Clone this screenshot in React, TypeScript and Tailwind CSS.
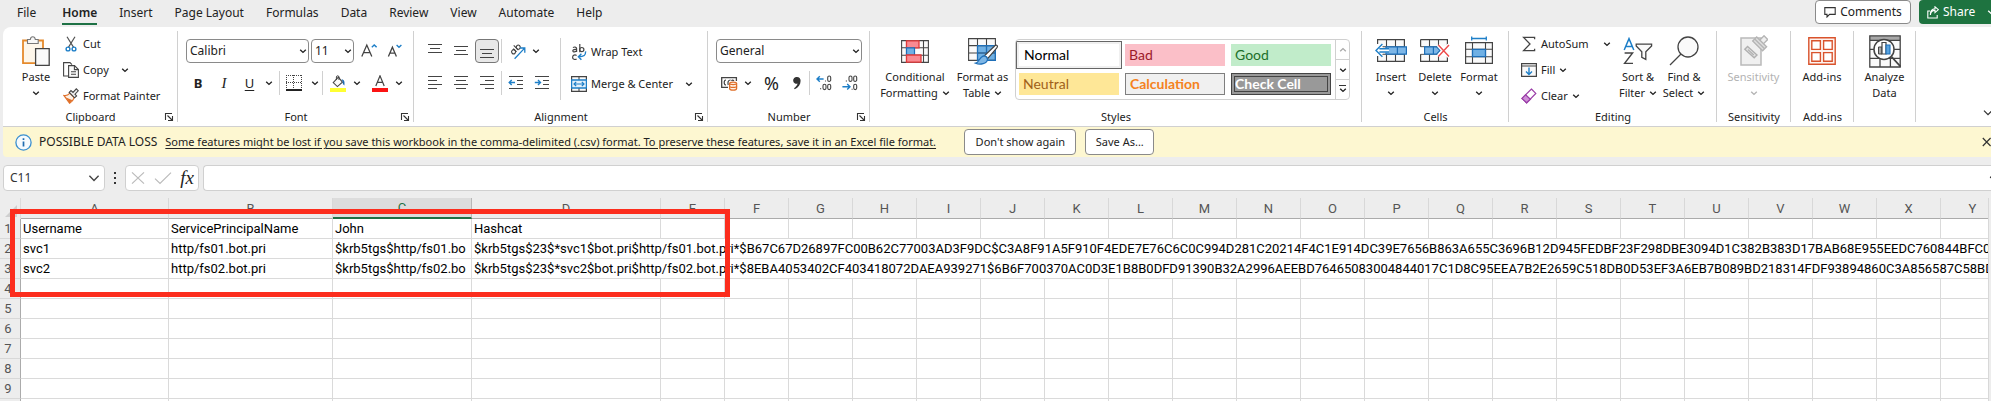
import type { ReactNode } from "react";

const INK = "#444444";
const BLUE = "#1e7fc8";

function Chevron({ className = "" }: { className?: string }) {
  return (
    <svg aria-hidden="true" width="8" height="8" viewBox="0 0 8 8" fill="none" className={`shrink-0 ${className}`}>
      <path d="M1.2 2.8L4 5.4L6.8 2.8" stroke="currentColor" strokeWidth="1.4" />
    </svg>
  );
}

function Launcher({ label }: { label: string }) {
  return (
    <button aria-label={label} className="absolute right-1 bottom-1 flex size-2.5 items-center justify-center text-[#333]">
      <svg aria-hidden="true" width="10" height="10" viewBox="0 0 10 10" fill="none" stroke="currentColor" strokeWidth="1.1">
        <path d="M1.5 8V1.5H8M3.5 3.5L8 8M8.5 4V8.5H4" />
      </svg>
    </button>
  );
}

function Group({ label, launcher, className = "", children }: { label?: string; launcher?: boolean; className?: string; children: ReactNode }) {
  return (
    <section aria-label={label} className={`relative flex h-full shrink-0 flex-col ${className}`}>
      <div className="flex h-20 shrink-0">{children}</div>
      <div className="h-5 text-center leading-5">{label}</div>
      {launcher && <Launcher label={`${label} settings`} />}
      <div className="absolute top-1 right-0 bottom-1 w-px bg-[#d0d0d0]" />
    </section>
  );
}

function BigButton({ icon, lines, chevron = "none", className = "" }: { icon: ReactNode; lines: string[]; chevron?: "below" | "inline" | "none"; className?: string }) {
  return (
    <button className={`flex shrink-0 flex-col items-center whitespace-nowrap ${className}`}>
      <span className="mt-1.5 flex h-9 items-center">{icon}</span>
      {lines.map((line, i) => (
        <span key={line} className="flex h-4 items-center gap-1 leading-4">
          {line}
          {chevron === "inline" && i === lines.length - 1 && <Chevron />}
        </span>
      ))}
      {chevron === "below" && (
        <span className="flex h-4 items-center">
          <Chevron />
        </span>
      )}
    </button>
  );
}

function IconButton({ label, className = "w-[26px]", children }: { label: string; className?: string; children: ReactNode }) {
  return (
    <button aria-label={label} className={`flex h-6 shrink-0 items-center justify-center ${className}`}>
      {children}
    </button>
  );
}

function Divider({ className = "h-6" }: { className?: string }) {
  return <span className={`w-px shrink-0 bg-[#d0d0d0] ${className}`} />;
}

function Dropdown({ label, value, className }: { label: string; value: string; className: string }) {
  return (
    <div className={`relative flex h-6 shrink-0 ${className}`}>
      <select aria-label={label} defaultValue={value} className="h-6 w-full appearance-none rounded border border-[#8a8a8a] bg-white pl-[3px] text-[12px] text-[#222]">
        <option>{value}</option>
      </select>
      <Chevron className="pointer-events-none absolute top-2 right-0.5" />
    </div>
  );
}

function Lines({ rows, y = 1 }: { rows: [number, number][]; y?: number }) {
  return (
    <svg aria-hidden="true" width="16" height="16" viewBox="0 0 16 16" stroke={INK} strokeWidth="1.2">
      {rows.map(([a, b], i) => (
        <path key={i} d={`M${a} ${y + 0.5 + i * 4}H${b}`} />
      ))}
    </svg>
  );
}

function PasteIcon() {
  return (
    <svg aria-hidden="true" width="28" height="30" viewBox="0 0 28 30" fill="none">
      <path d="M1 4.5H21V27.2H1Z" fill="#fdf6ea" stroke="#e58a2c" strokeWidth="1.8" />
      <path d="M5.5 7.5V3.5H8.3C8.5 1.9 9.4.7 10.8.7S13.1 1.9 13.3 3.5H16.2V7.5Z" fill="#f7f7f7" stroke="#777" strokeWidth="1.1" />
      <path d="M13.6 12.6H27.2V29.3H13.6Z" fill="#fafafa" stroke={INK} strokeWidth="1.3" />
    </svg>
  );
}

function CutIcon() {
  return (
    <svg aria-hidden="true" width="16" height="16" viewBox="0 0 16 16" fill="none">
      <path d="M4 .8L10.6 11.4M12 .8L5.4 11.4" stroke="#555" strokeWidth="1.2" />
      <circle cx="5" cy="13" r="1.9" stroke={BLUE} strokeWidth="1.4" />
      <circle cx="11" cy="13" r="1.9" stroke={BLUE} strokeWidth="1.4" />
    </svg>
  );
}

function CopyIcon() {
  return (
    <svg aria-hidden="true" width="16" height="16" viewBox="0 0 16 16" fill="none" stroke={INK} strokeWidth="1.1">
      <path d="M5 14H.6V.6H7L9 2.6" />
      <path d="M5.6 3.6H11.5L15.4 7.5V15.4H5.6Z" fill="#fafafa" />
      <path d="M11.4 3.6V7.6H15.4M8 9.7H13M8 12.3H13" />
    </svg>
  );
}

function PainterIcon() {
  return (
    <svg aria-hidden="true" width="16" height="16" viewBox="0 0 16 16" fill="none">
      <path d="M1 7.5C3.5 8 5.6 6.6 7 5.2L11.2 9.6C10.4 12 8.8 14 6.6 15.2Z" fill="#fdf0e4" stroke="#e0702a" strokeWidth="1.2" />
      <path d="M3 9.6L9.5 12.2L6.6 15Z" fill="#e0702a" />
      <path d="M6.2 4.4L8 2.6L10 4.4L13.3.8L15.3 2.8L12 6.2L13.6 8L11.6 9.8Z" fill="#eee" stroke={INK} strokeWidth="1.1" />
    </svg>
  );
}

function BordersIcon() {
  return (
    <svg aria-hidden="true" width="16" height="16" viewBox="0 0 16 16" fill="none" stroke={INK}>
      <path d="M0 .5H16M0 7.5H16M.5 0V14M7.5 0V14M15.5 0V14" strokeDasharray="1 1" />
      <path d="M0 15H16" strokeWidth="1.8" stroke="#222" />
    </svg>
  );
}

function FillColorIcon() {
  return (
    <svg aria-hidden="true" width="16" height="17" viewBox="0 0 16 17" fill="none">
      <path d="M3.2 7.6L8.4 2.2L12.4 7.2L7.4 11.6Z" fill="#fafafa" stroke={INK} strokeWidth="1.1" />
      <path d="M6.4 5V2C6.4.4 9 .4 9 2V5" stroke={INK} strokeWidth="1" />
      <path d="M11.6 4.2C14.6 4.4 14.8 7.4 14.4 10.4C13 9.8 12.4 7.6 12.6 6.4Z" fill="#1f6cb0" />
      <path d="M0 13H16V17H0Z" fill="#ffff33" />
    </svg>
  );
}

function FontColorIcon() {
  return (
    <svg aria-hidden="true" width="16" height="17" viewBox="0 0 16 17" fill="none">
      <path d="M3.8 11L8 .8L12.2 11M5.3 7.4H10.7" stroke={INK} strokeWidth="1.2" />
      <path d="M0 13H16V17H0Z" fill="#fb1414" />
    </svg>
  );
}

function GrowFontIcon({ shrink }: { shrink?: boolean }) {
  return shrink ? (
    <svg aria-hidden="true" width="16" height="16" viewBox="0 0 16 16" fill="none">
      <path d="M1.4 13.4L5.4 4.2L9.4 13.4M2.9 10.2H7.9" stroke={INK} strokeWidth="1.3" />
      <path d="M9.6 2L12 4.2L14.4 2" stroke={BLUE} strokeWidth="1.4" />
    </svg>
  ) : (
    <svg aria-hidden="true" width="16" height="16" viewBox="0 0 16 16" fill="none">
      <path d="M.8 13.4L5.8 2L10.8 13.4M2.6 9.6H9" stroke={INK} strokeWidth="1.3" />
      <path d="M10.8 4.2L13.2 2L15.6 4.2" stroke={BLUE} strokeWidth="1.4" />
    </svg>
  );
}

function OrientationIcon() {
  return (
    <svg aria-hidden="true" width="17" height="17" viewBox="0 0 17 17" fill="none">
      <g transform="rotate(-45 6 6)" stroke={INK} strokeWidth="1.1">
        <circle cx="3" cy="7" r="2" />
        <path d="M5 4.6V9.2M7.6 2.6V9.2" />
        <circle cx="9.6" cy="7" r="2" />
      </g>
      <path d="M5.6 15.8L15.4 5.4M11 5H15.8V9.8" stroke={BLUE} strokeWidth="1.3" />
    </svg>
  );
}

function IndentIcon({ increase }: { increase?: boolean }) {
  return (
    <svg aria-hidden="true" width="16" height="16" viewBox="0 0 16 16" fill="none">
      <path d="M1 1.5H15M9 5.5H15M9 9.5H15M1 13.5H15" stroke={INK} strokeWidth="1.2" />
      <path d={increase ? "M.8 7.5H6.4M4 5L6.5 7.5L4 10" : "M7 7.5H1.2M3.7 5L1.2 7.5L3.7 10"} stroke={BLUE} strokeWidth="1.4" />
    </svg>
  );
}

function WrapIcon() {
  return (
    <svg aria-hidden="true" width="16" height="17" viewBox="0 0 16 17" fill="none">
      <g stroke={INK} strokeWidth="1.2">
        <path d="M2 3.6C3 2.8 5.6 2.6 5.6 4.6V8M5.6 5.4C3.6 5.2 1.8 5.6 1.8 6.8C1.8 8.4 4.8 8.2 5.6 6.6" />
        <path d="M8.8 0V8.2" />
        <circle cx="10.8" cy="5.6" r="2.1" />
        <path d="M5.6 11.4C4 10.4 1.6 11 1.6 13.2S4 16 5.6 15" />
      </g>
      <path d="M14.6 7.4C14.8 11.2 13 12.8 7.6 12.8M10.4 9.8L7.4 12.8L10.4 15.8" stroke={BLUE} strokeWidth="1.4" />
    </svg>
  );
}

function MergeIcon() {
  return (
    <svg aria-hidden="true" width="16" height="16" viewBox="0 0 16 16" fill="none">
      <path d="M.6.6H15.4V15.4H.6Z" fill="#fafafa" stroke={INK} strokeWidth="1.2" />
      <path d="M8 1V4M8 12V15" stroke={INK} strokeWidth="1.1" />
      <path d="M.6 4H15.4V12H.6Z" fill="#e4f1fb" stroke={BLUE} strokeWidth="1.3" />
      <path d="M3 8H13M5.2 5.8L3 8L5.2 10.2M10.8 5.8L13 8L10.8 10.2" stroke={BLUE} strokeWidth="1.2" />
    </svg>
  );
}

function CurrencyIcon() {
  return (
    <svg aria-hidden="true" width="17" height="15" viewBox="0 0 17 15" fill="none">
      <path d="M7 11.4H.7V1.6H15.4V5" stroke={INK} strokeWidth="1.3" />
      <path d="M5 4C2.6 4 2.6 9 5 9M9.6 4C7 4 6.6 6.5 7.2 9M13 4.8C12 3.8 11 3.8 10.6 5" stroke={INK} strokeWidth="1.2" />
      <path d="M8.6 7.4C8.6 5.6 15.6 5.6 15.6 7.4V12.4C15.6 14.6 8.6 14.6 8.6 12.4Z" fill="#fff3e8" stroke="#e0702a" strokeWidth="1.3" />
      <path d="M8.6 7.6C8.6 9 15.6 9 15.6 7.6M8.6 10.2C8.6 11.8 15.6 11.8 15.6 10.2" stroke="#e0702a" strokeWidth="1.2" />
    </svg>
  );
}

function DecimalIcon({ increase }: { increase?: boolean }) {
  return (
    <svg aria-hidden="true" width="16" height="16" viewBox="0 0 16 16" fill="none">
      <g stroke={INK} strokeWidth="1.1">
        <rect x="11.7" y="1" width="3" height="5.4" rx="1.5" />
        {!increase && <rect x="7" y="1" width="3" height="5.4" rx="1.5" />}
        {increase && <rect x="7" y="9.2" width="3" height="5.4" rx="1.5" />}
        <rect x="11.7" y="9.2" width="3" height="5.4" rx="1.5" />
        <path d={increase ? "M4 13.8H5.2M9 6H9.9" : "M3.8 6H5M9.6 14.2H10.6"} />
      </g>
      <path d={increase ? "M7.6 4H1M3.8 1.2L1 4L3.8 6.8" : "M.4 11.8H8M5.2 9L8 11.8L5.2 14.6"} stroke={BLUE} strokeWidth="1.4" />
    </svg>
  );
}

function ConditionalIcon() {
  return (
    <svg aria-hidden="true" width="28" height="23" viewBox="0 0 28 23" fill="none">
      <path d="M.6.6H27.4V22.4H.6Z" fill="#fafafa" />
      <path d="M.6.6H27.4V22.4H.6ZM5.5.6V22.4M22.5.6V22.4M.6 7.8H27.4M.6 15.2H27.4" stroke={INK} strokeWidth="1.1" />
      <path d="M5.5.8H18V7.8H5.5Z" fill="#f98a92" stroke="#e03a3a" strokeWidth="1.3" />
      <path d="M5.5 7.8H13.5V15.2H5.5Z" fill="#6fb0e4" stroke="#1e6fb8" strokeWidth="1.2" />
      <path d="M5.5 15H20V22.2H5.5Z" fill="#f98a92" stroke="#e03a3a" strokeWidth="1.3" />
    </svg>
  );
}

function TableBrushIcon() {
  return (
    <svg aria-hidden="true" width="30" height="28" viewBox="0 0 30 28" fill="none">
      <path d="M.6 1.6H27.4V23.4H.6Z" fill="#fafafa" />
      <path d="M9.5 8.6H27.4V23.4H9.5Z" fill="#6fb0e4" />
      <path d="M.6 1.6H27.4V23.4H.6ZM9.5 1.6V23.4M18.5 1.6V23.4M.6 8.6H27.4M.6 16H27.4" stroke={INK} strokeWidth="1.1" />
      <path d="M9.5 8.6H27.4V23.4H9.5ZM18.5 8.6V23.4M9.5 16H27.4" stroke="#1e6fb8" strokeWidth="1.2" />
      <path d="M28.6 8.2C30 9 29.4 10.2 28.6 11.2L19.6 21.6L16.4 18.8L26.4 9.2C27.2 8.4 27.8 7.8 28.6 8.2Z" fill="#fff" stroke={INK} strokeWidth="1.2" />
      <path d="M16.2 18.8C18.4 19.2 19.6 20.6 19.4 22.8C19 26.4 12.4 28.4 7.6 26.2C11.6 25.6 11.2 19.2 16.2 18.8Z" fill="#7db6e6" stroke="#1e6fb8" strokeWidth="1.2" />
    </svg>
  );
}

function InsertIcon() {
  return (
    <svg aria-hidden="true" width="32" height="24" viewBox="0 0 32 24" fill="none">
      <path d="M2.6.6H29.4V22.4H2.6Z" fill="#fafafa" stroke={INK} strokeWidth="1.2" />
      <path d="M11.5.6V22.4M20.5.6V22.4M2.6 7.8H29.4M2.6 15.2H29.4" stroke={INK} strokeWidth="1.1" />
      <path d="M11 7.8H31.4V15.2H11ZM22.4 7.8V15.2" fill="#7db6e6" stroke="#1e6fb8" strokeWidth="1.2" />
      <path d="M0 5H7L8 9.8H14V13.4H8L7 17H0Z" fill="#fff" />
      <path d="M7.4 5L1 11.4L7.4 17.8M14 9.8H4.4M14 13H4.4" stroke={BLUE} strokeWidth="1.4" />
    </svg>
  );
}

function DeleteIcon() {
  return (
    <svg aria-hidden="true" width="30" height="24" viewBox="0 0 30 24" fill="none">
      <path d="M.6.6H27.4V22.4H.6V15.2M.6 7.8V.6" fill="#fafafa" stroke={INK} strokeWidth="1.2" />
      <path d="M9.5.6V7.8M18.5.6V7.8M9.5 15.2V22.4M18.5 15.2V22.4M.6 7.8H27.4M.6 15.2H27.4" stroke={INK} strokeWidth="1.1" />
      <path d="M0 8.6H4V14.4H0Z" fill="#fff" />
      <path d="M4.6 7.8H16.5L20 11.4L16.5 15.2H4.6ZM13.4 7.8V15.2" fill="#7db6e6" stroke="#1e6fb8" strokeWidth="1.2" />
      <path d="M22 7H30V17H22Z" fill="#fff" />
      <path d="M18.4 6L29 17.4M29 6L18.4 17.4" stroke="#fff" strokeWidth="4" />
      <path d="M18.4 6L29 17.4M29 6L18.4 17.4" stroke="#ee4b4b" strokeWidth="1.4" />
    </svg>
  );
}

function FormatIcon() {
  return (
    <svg aria-hidden="true" width="28" height="32" viewBox="0 0 28 32" fill="none">
      <path d="M.6 7.6H27.4V28.4H.6Z" fill="#fafafa" stroke={INK} strokeWidth="1.2" />
      <path d="M7.5 7.6V28.4M20.5 7.6V28.4M.6 14.3H27.4M.6 21.7H27.4" stroke={INK} strokeWidth="1.1" />
      <path d="M7.5 14.3H20.5V21.7H7.5Z" fill="#6fb0e4" stroke="#1e6fb8" strokeWidth="1.3" />
      <path d="M6.7 3.5H21.3M6.7 1.5V5.5M21.3 1.5V5.5" stroke={BLUE} strokeWidth="1.3" />
    </svg>
  );
}

function SumIcon() {
  return (
    <svg aria-hidden="true" width="16" height="16" viewBox="0 0 16 16" fill="none" stroke={INK} strokeWidth="1.3">
      <path d="M13.6 3.2V1.4H2.6L9 8L2.6 14.6H13.6V12.8" />
    </svg>
  );
}

function FillIcon() {
  return (
    <svg aria-hidden="true" width="16" height="16" viewBox="0 0 16 16" fill="none">
      <path d="M.6 1.6H15.4V14.4H.6ZM.6 4H15.4" fill="#fafafa" stroke={INK} strokeWidth="1.2" />
      <path d="M8 5.6V12.2M5 9.4L8 12.4L11 9.4" stroke={BLUE} strokeWidth="1.4" />
    </svg>
  );
}

function ClearIcon() {
  return (
    <svg aria-hidden="true" width="16" height="16" viewBox="0 0 16 16" fill="none" stroke="#9b3fa8" strokeWidth="1.2">
      <path d="M10.4 1L14.8 5.4L5.6 14.8L1 10.4Z" fill="#fff" />
      <path d="M4.6 6.8L9.4 11.2L5.6 14.8L1 10.4Z" fill="#cf8fd8" />
    </svg>
  );
}

function SortIcon() {
  return (
    <svg aria-hidden="true" width="30" height="28" viewBox="0 0 30 28" fill="none">
      <path d="M1.2 13L6 1.6L10.8 13M2.8 9.4H9.2" stroke={BLUE} strokeWidth="1.5" />
      <path d="M1.6 16H9.6L1.6 26.4H10" stroke={INK} strokeWidth="1.4" />
      <path d="M13.2 7.2H28.6V9L22.8 14.8V22.4L18.8 20.4V14.8L13.2 9Z" fill="#fafafa" stroke={INK} strokeWidth="1.3" />
    </svg>
  );
}

function FindIcon() {
  return (
    <svg aria-hidden="true" width="30" height="30" viewBox="0 0 30 30" fill="none" stroke={INK} strokeWidth="1.3">
      <circle cx="19" cy="11" r="10" fill="#fafafa" />
      <path d="M12 18L1 29" />
    </svg>
  );
}

function SensitivityIcon() {
  return (
    <svg aria-hidden="true" width="28" height="32" viewBox="0 0 28 32" fill="none">
      <path d="M1 3H21V30H1Z" fill="#f0f0f0" stroke="#b9b9b9" strokeWidth="1.5" />
      <g transform="translate(20.5 8) rotate(45)" fill="#efefef" stroke="#b5b5b5" strokeWidth="1.4">
        <path d="M-2.6-7.6H2.6V-1H-2.6Z" />
        <path d="M-7 -1.6H7V4H-7Z" fill="#dedede" />
        <path d="M-7 1.2H7" />
      </g>
      <path d="M7.6 11.4L17 20L14.2 22.8L4.8 14.2Z" fill="#e2e2e2" stroke="#b0b0b0" strokeWidth="1.4" />
      <path d="M8 14.6L13.8 20" stroke="#b0b0b0" strokeWidth="1.2" />
    </svg>
  );
}

function AddInsIcon() {
  return (
    <svg aria-hidden="true" width="28" height="28" viewBox="0 0 28 28" fill="#fff" stroke="#d9532c" strokeWidth="1.4">
      <path d="M.8.8H27.2V27.2H.8Z" fill="#fdf3ef" />
      <path d="M3.8 3.8H12.4V12.4H3.8ZM15.6 3.8H24.2V12.4H15.6ZM3.8 15.6H12.4V24.2H3.8ZM15.6 15.6H24.2V24.2H15.6Z" />
    </svg>
  );
}

function AnalyzeIcon() {
  return (
    <svg aria-hidden="true" width="32" height="33" viewBox="0 0 32 33" fill="none">
      <path d="M.8.8H31.2V32H.8Z" fill="#fafafa" />
      <path d="M.8.8H31.2V5.4H.8Z" fill="#a8a8a8" />
      <path d="M.8.8H31.2V32H.8ZM.8 5.4H31.2M.8 14.4H31.2M.8 23.4H31.2M11 5.4V32M21.4 5.4V32" stroke={INK} strokeWidth="1.3" />
      <circle cx="15" cy="14.4" r="10" fill="#fff" stroke={INK} strokeWidth="1.5" />
      <path d="M9.5 12H13V19H9.5Z" fill="#aaa" stroke={INK} />
      <path d="M13 7.5H17V19H13Z" fill="#fff" stroke={INK} strokeWidth="1.2" />
      <path d="M17 10H21V19H17Z" fill="#5aa4e0" stroke="#1e6fb8" strokeWidth="1.1" />
      <path d="M22.4 21.6L31.6 31.6" stroke={INK} strokeWidth="1.6" />
    </svg>
  );
}

const tabs = ["Home", "Insert", "Page Layout", "Formulas", "Data", "Review", "View", "Automate", "Help"];

function TabBar() {
  return (
    <header className="flex h-[27px] shrink-0 items-start text-[12px]">
      <nav aria-label="Ribbon tabs" className="flex pl-[6px]">
        <button className="mr-1 flex h-[25px] flex-col px-[11px]">
          <span className="pt-[3px] leading-5">File</span>
        </button>
        {tabs.map((t) => (
          <button key={t} className="flex h-[25px] flex-col items-stretch px-[11px]">
            <span className={t === "Home" ? "border-b-2 border-[#1e7145] pt-[3px] leading-5 font-semibold" : "pt-[3px] leading-5"}>{t}</span>
          </button>
        ))}
      </nav>
      <button className="ml-auto flex h-6 w-24 shrink-0 items-center justify-center gap-1 rounded border border-[#8a8a8a] bg-white text-[#222]">
        <svg aria-hidden="true" width="12" height="12" viewBox="0 0 12 12" fill="none" stroke="#333" strokeWidth="1.1">
          <path d="M.8 1.6H11.2V8.4H5.6L3 11V8.4H.8Z" />
        </svg>
        Comments
      </button>
      <button className="ml-2 flex h-6 w-[72px] shrink-0 items-center gap-1 rounded-l bg-[#1e7340] pl-2 text-white">
        <svg aria-hidden="true" width="12" height="13" viewBox="0 0 12 13" fill="none" stroke="white" strokeWidth="1.1">
          <path d="M3 5H.8V12H10.2V9M3.4 9C3.6 5.8 5.4 4.4 8 4.4V6.6L11.4 3.6L8 .8V2.8C4.8 3 3.2 5.4 3.4 9Z" />
        </svg>
        Share
        <Chevron className="-mr-1 ml-auto" />
      </button>
    </header>
  );
}

function SmallRow({ icon, text, children }: { icon: ReactNode; text: string; children?: ReactNode }) {
  return (
    <button className="flex h-[26px] shrink-0 items-center gap-1 whitespace-nowrap">
      {icon}
      <span>{text}</span>
      {children}
    </button>
  );
}

function StylesGallery() {
  const cell = "flex h-[22px] w-[100px] items-center pl-1 text-[14px] font-['Lato',sans-serif]";
  return (
    <div className="mt-3 flex h-[61px] w-[335px] shrink-0 overflow-hidden rounded border border-[#d0d0d0]">
      <div className="grid flex-1 grid-cols-[106px_106px_106px] grid-rows-2 items-center">
        <button className="flex h-7 w-[106px] items-center border border-[#666] pl-[7px] font-['Lato',sans-serif] text-[14px] text-black shadow-[inset_0_0_0_2px_#f0f0f0]">Normal</button>
        <button className={`${cell} ml-[3px] bg-[#fbbfc8] text-[#9c1a2a]`}>Bad</button>
        <button className={`${cell} ml-[3px] bg-[#c1ecca] text-[#20702a]`}>Good</button>
        <button className={`${cell} ml-[3px] bg-[#fee797] text-[#a0601a]`}>Neutral</button>
        <button className={`${cell} ml-[3px] border border-[#7f7f7f] bg-[#f0f0f0] font-bold text-[#f58220]`}>Calculation</button>
        <button className={`${cell} ml-[3px] border-4 border-double border-[#444] bg-[#999] font-bold text-white`}>
          <span className="-ml-1">Check Cell</span>
        </button>
      </div>
      <div className="flex w-[14px] flex-col border-l border-[#d0d0d0]">
        <button aria-label="Scroll styles up" className="flex flex-1 items-center justify-center text-[#aaa]">
          <Chevron className="rotate-180" />
        </button>
        <button aria-label="Scroll styles down" className="flex flex-1 items-center justify-center border-y border-[#d0d0d0]">
          <Chevron />
        </button>
        <button aria-label="More styles" className="flex flex-1 flex-col items-center justify-center">
          <span className="h-px w-[7px] bg-[#333]" />
          <Chevron />
        </button>
      </div>
    </div>
  );
}

function Ribbon() {
  return (
    <div className="ml-[3px] flex h-[100px] shrink-0 overflow-hidden rounded-tl-lg border-b border-[#d0d0d0] bg-white">
      <Group label="Clipboard" launcher className="w-[175px]">
        <BigButton icon={<PasteIcon />} lines={["Paste"]} chevron="below" className="ml-[11px] w-[44px]" />
        <div className="ml-[5px] flex flex-col pt-1">
          <SmallRow icon={<CutIcon />} text="Cut" />
          <SmallRow icon={<CopyIcon />} text="Copy">
            <Chevron className="ml-2" />
          </SmallRow>
          <SmallRow icon={<PainterIcon />} text="Format Painter" />
        </div>
      </Group>

      <Group label="Font" launcher className="w-[236px]">
        <div className="flex flex-col gap-2 pt-3">
          <div className="flex pl-2">
            <Dropdown label="Font name" value="Calibri" className="w-[123px]" />
            <Dropdown label="Font size" value="11" className="ml-0.5 w-[43px]" />
            <IconButton label="Increase font size" className="ml-0.5 w-[26px]">
              <GrowFontIcon />
            </IconButton>
            <IconButton label="Decrease font size">
              <GrowFontIcon shrink />
            </IconButton>
          </div>
          <div className="flex pl-2 text-[13px]">
            <IconButton label="Bold" className="w-6">
              <b>B</b>
            </IconButton>
            <IconButton label="Italic" className="w-7">
              <i className="font-['Liberation_Serif',serif] text-[15px]">I</i>
            </IconButton>
            <IconButton label="Underline" className="w-[23px]">
              <span className="underline underline-offset-2">U</span>
            </IconButton>
            <IconButton label="Underline options" className="w-4">
              <Chevron />
            </IconButton>
            <Divider className="ml-0.5 h-6" />
            <IconButton label="Borders" className="w-7">
              <BordersIcon />
            </IconButton>
            <IconButton label="Border options" className="w-[14px]">
              <Chevron />
            </IconButton>
            <Divider />
            <IconButton label="Fill color" className="ml-0.5 w-[26px]">
              <FillColorIcon />
            </IconButton>
            <IconButton label="Fill color options" className="w-3">
              <Chevron />
            </IconButton>
            <IconButton label="Font color" className="ml-1 w-[26px]">
              <FontColorIcon />
            </IconButton>
            <IconButton label="Font color options" className="w-3">
              <Chevron />
            </IconButton>
          </div>
        </div>
      </Group>

      <Group label="Alignment" launcher className="w-[294px]">
        <div className="flex w-[146px] flex-col gap-2 pt-3 pl-2">
          <div className="flex">
            <IconButton label="Top align">
              <Lines rows={[[1, 15], [3, 13], [1, 15]]} />
            </IconButton>
            <IconButton label="Middle align">
              <Lines rows={[[1, 15], [3, 13], [1, 15]]} y={3} />
            </IconButton>
            <IconButton label="Bottom align" className="ml-px w-6 rounded border border-[#777] bg-[#e8e8e8]">
              <Lines rows={[[1, 15], [3, 13], [1, 15]]} y={6} />
            </IconButton>
            <Divider className="ml-0.5 h-6" />
            <IconButton label="Orientation" className="ml-0.5 w-[26px]">
              <OrientationIcon />
            </IconButton>
            <IconButton label="Orientation options" className="w-3">
              <Chevron />
            </IconButton>
          </div>
          <div className="flex">
            <IconButton label="Align left">
              <Lines rows={[[1, 15], [1, 10], [1, 15], [1, 10]]} />
            </IconButton>
            <IconButton label="Center">
              <Lines rows={[[1, 15], [3, 13], [1, 15], [3, 13]]} />
            </IconButton>
            <IconButton label="Align right">
              <Lines rows={[[1, 15], [6, 15], [1, 15], [6, 15]]} />
            </IconButton>
            <Divider className="ml-px h-6" />
            <IconButton label="Decrease indent" className="ml-px w-[26px]">
              <IndentIcon />
            </IconButton>
            <IconButton label="Increase indent">
              <IndentIcon increase />
            </IconButton>
          </div>
        </div>
        <Divider className="mt-[11px] h-[62px]" />
        <div className="flex flex-col gap-1.5 pt-3 pl-[10px]">
          <SmallRow icon={<WrapIcon />} text="Wrap Text" />
          <SmallRow icon={<MergeIcon />} text="Merge & Center">
            <Chevron className="ml-2" />
          </SmallRow>
        </div>
      </Group>

      <Group label="Number" launcher className="w-[162px]">
        <div className="flex flex-col gap-2 pt-3 pl-2">
          <Dropdown label="Number format" value="General" className="w-[146px]" />
          <div className="flex">
            <IconButton label="Accounting format">
              <CurrencyIcon />
            </IconButton>
            <IconButton label="Accounting options" className="w-3">
              <Chevron />
            </IconButton>
            <IconButton label="Percent style" className="ml-1 w-[27px]">
              <span className="text-[18px]">%</span>
            </IconButton>
            <IconButton label="Comma style" className="w-6">
              <svg aria-hidden="true" width="10" height="14" viewBox="0 0 10 14" fill="#333">
                <path d="M5 1A3.4 3.4 0 1 0 5.6 7.6C5 9.6 4 11 2 12.2L2.8 13.2C6.4 11.6 8.6 8.6 8.6 4.8C8.6 2.4 7.2 1 5 1Z" />
              </svg>
            </IconButton>
            <Divider />
            <IconButton label="Increase decimal" className="ml-px w-[26px]">
              <DecimalIcon increase />
            </IconButton>
            <IconButton label="Decrease decimal">
              <DecimalIcon />
            </IconButton>
          </div>
        </div>
      </Group>

      <Group label="Styles" className="w-[492px]">
        <BigButton icon={<ConditionalIcon />} lines={["Conditional", "Formatting"]} chevron="inline" className="ml-2 w-[74px]" />
        <BigButton icon={<TableBrushIcon />} lines={["Format as", "Table"]} chevron="inline" className="mr-0.5 w-[61px]" />
        <StylesGallery />
      </Group>

      <Group label="Cells" className="w-[147px]">
        <BigButton icon={<InsertIcon />} lines={["Insert"]} chevron="below" className="ml-[7px] w-[44px]" />
        <BigButton icon={<DeleteIcon />} lines={["Delete"]} chevron="below" className="w-[44px]" />
        <BigButton icon={<FormatIcon />} lines={["Format"]} chevron="below" className="w-[44px]" />
      </Group>

      <Group label="Editing" className="w-[208px]">
        <div className="ml-3 flex w-[90px] flex-col pt-1">
          <SmallRow icon={<SumIcon />} text="AutoSum">
            <Chevron className="ml-auto" />
          </SmallRow>
          <SmallRow icon={<FillIcon />} text="Fill">
            <Chevron />
          </SmallRow>
          <SmallRow icon={<ClearIcon />} text="Clear">
            <Chevron />
          </SmallRow>
        </div>
        <BigButton icon={<SortIcon />} lines={["Sort &", "Filter"]} chevron="inline" className="ml-1 w-[46px]" />
        <BigButton icon={<FindIcon />} lines={["Find &", "Select"]} chevron="inline" className="w-[46px]" />
      </Group>

      <Group label="Sensitivity" className="w-[74px]">
        <BigButton icon={<SensitivityIcon />} lines={["Sensitivity"]} chevron="below" className="w-[73px] text-[#b3b3b3]" />
      </Group>

      <Group label="Add-ins" className="w-[63px]">
        <BigButton icon={<AddInsIcon />} lines={["Add-ins"]} className="w-[62px]" />
      </Group>

      <Group className="w-[62px]">
        <BigButton icon={<AnalyzeIcon />} lines={["Analyze", "Data"]} className="w-[61px]" />
      </Group>

      <button aria-label="Collapse ribbon" className="-mr-0.5 mb-2 ml-auto self-end">
        <svg aria-hidden="true" width="10" height="10" viewBox="0 0 10 10" fill="none" stroke="#333" strokeWidth="1.3">
          <path d="M1 2.6L5 6.6L9 2.6" />
        </svg>
      </button>
    </div>
  );
}

function MessageBar() {
  const btn = "h-[26px] shrink-0 rounded border border-[#8a8a8a] bg-white text-[#222]";
  return (
    <div role="status" className="ml-[3px] flex h-[30px] shrink-0 items-center rounded-bl bg-[#fdf7d1] pl-3 whitespace-nowrap text-[#222]">
      <svg aria-hidden="true" width="17" height="17" viewBox="0 0 17 17" fill="none" className="shrink-0">
        <circle cx="8.5" cy="8.5" r="7.6" fill="#f5fafd" stroke="#3a8fd0" strokeWidth="1.3" />
        <path d="M8.5 7.4V12.6M8.5 4.2V6" stroke="#1f6cb0" strokeWidth="1.7" />
      </svg>
      <span className="ml-[7px] text-[12px]">POSSIBLE DATA LOSS</span>
      <a href="#formats" className="ml-2 w-[799px] shrink-0">
        <span className="underline underline-offset-2">
          Some features might be lost if you save this workbook in the comma-delimited (.csv) format. To preserve these features, save it in an Excel file format.
        </span>
      </a>
      <button className={`${btn} w-28`}>Don't show again</button>
      <button className={`${btn} ml-[9px] w-[69px]`}>Save As...</button>
      <button aria-label="Close message" className="ml-auto shrink-0">
        <svg aria-hidden="true" width="9" height="10" viewBox="0 0 9 10" fill="none" stroke="#333" strokeWidth="1.2">
          <path d="M.8 1L8.6 9M8.6 1L.8 9" />
        </svg>
      </button>
    </div>
  );
}

function FormulaBar() {
  return (
    <div className="flex h-[41px] shrink-0 items-center pl-[3px]">
      <div className="flex h-[26px] w-[102px] shrink-0 items-center rounded border border-[#d0d0d0] bg-white pr-1">
        <input aria-label="Name box" defaultValue="C11" className="w-0 flex-1 bg-transparent pl-1.5 text-[12px] text-[#333] outline-none" />
        <button aria-label="Name box options">
          <svg aria-hidden="true" width="12" height="12" viewBox="0 0 12 12" fill="none" stroke="#444" strokeWidth="1.4">
            <path d="M1.4 3.8L6 8.4L10.6 3.8" />
          </svg>
        </button>
      </div>
      <span className="flex w-5 shrink-0 flex-col items-center gap-[3px]">
        <i className="size-0.5 bg-[#333]" />
        <i className="size-0.5 bg-[#333]" />
        <i className="size-0.5 bg-[#333]" />
      </span>
      <div className="flex h-[26px] w-[74px] shrink-0 items-center justify-between rounded border border-[#d0d0d0] bg-white px-1">
        <button aria-label="Cancel">
          <svg aria-hidden="true" width="16" height="16" viewBox="0 0 16 16" fill="none" stroke="#bbb" strokeWidth="1.2">
            <path d="M2 2.4L14 13.6M14 2.4L2 13.6" />
          </svg>
        </button>
        <button aria-label="Enter">
          <svg aria-hidden="true" width="18" height="16" viewBox="0 0 18 16" fill="none" stroke="#bbb" strokeWidth="1.2">
            <path d="M1 8.6L6 13.4L17 2.6" />
          </svg>
        </button>
        <button aria-label="Insert function" className="font-['Liberation_Serif',serif] text-[19px] leading-4 text-[#222] italic">
          fx
        </button>
      </div>
      <div className="ml-1 flex h-[26px] flex-1 items-center rounded-l border border-r-0 border-[#d0d0d0] bg-white">
        <input aria-label="Formula" className="w-0 flex-1 bg-transparent px-2 outline-none" />
        <button aria-label="Expand formula bar" className="-mr-1.5">
          <Chevron />
        </button>
      </div>
    </div>
  );
}

const columns = "ABCDEFGHIJKLMNOPQRSTUVWXY".split("");

const rows: string[][] = [
  ["Username", "ServicePrincipalName", "John", "Hashcat"],
  [
    "svc1",
    "http/fs01.bot.pri",
    "$krb5tgs$http/fs01.bo",
    "$krb5tgs$23$*svc1$bot.pri$http/fs01.bot.pri*$B67C67D26897FC00B62C77003AD3F9DC$C3A8F91A5F910F4EDE7E76C6C0C994D281C20214F4C1E914DC39E7656B863A655C3696B12D945FEDBF23F298DBE3094D1C382B383D17BAB68E955EEDC760844BFC02F0",
  ],
  [
    "svc2",
    "http/fs02.bot.pri",
    "$krb5tgs$http/fs02.bo",
    "$krb5tgs$23$*svc2$bot.pri$http/fs02.bot.pri*$8EBA4053402CF403418072DAEA939271$6B6F700370AC0D3E1B8B0DFD91390B32A2996AEEBD76465083004844017C1D8C95EEA7B2E2659C518DB0D53EF3A6EB7B089BD218314FDF93894860C3A856587C58BD2C",
  ],
  [], [], [], [], [], [],
];

function Sheet() {
  const head = "h-5 border-b border-[#ababab] bg-[#ededed] p-0 font-normal text-[#555]";
  return (
    <main className="relative min-h-0 flex-1">
      <div className="mr-0.5 h-full overflow-hidden border-r border-[#d8d8d8] bg-white">
        <table className="w-[2005px] table-fixed border-separate border-spacing-0 bg-white font-['Roboto',sans-serif] text-[13px] leading-[19px] text-black">
          <colgroup>
            <col className="w-[21px]" />
            <col className="w-[148px]" />
            <col className="w-[164px]" />
            <col className="w-[139px]" />
            <col className="w-[189px]" />
            {columns.slice(4).map((c) => (
              <col key={c} className="w-16" />
            ))}
          </colgroup>
          <thead>
            <tr>
              <td aria-label="Select all" className="h-5 border-r border-r-[#dcdcdc] bg-[#ededed] p-0">
                <svg aria-hidden="true" width="20" height="18" viewBox="0 0 20 18">
                  <path d="M17 5V17H5Z" fill="#cfcfcf" />
                </svg>
              </td>
              {columns.map((c) => (
                <th
                  key={c}
                  scope="col"
                  className={
                    c === "C"
                      ? "h-5 border-r border-b-2 border-r-[#b8b8b8] border-b-[#1e7145] bg-[#dcdcdc] p-0 font-normal text-[#1e7145]"
                      : `${head} border-r border-r-[#d8d8d8]`
                  }
                >
                  {c}
                </th>
              ))}
            </tr>
          </thead>
          <tbody>
            {rows.map((cells, r) => {
              const spill = r === 1 || r === 2;
              return (
                <tr key={r}>
                  <th scope="row" className="h-5 border-r border-b border-r-[#ababab] border-b-[#d8d8d8] bg-[#ededed] p-0 pr-1 font-normal text-[#555]">
                    {r + 1}
                  </th>
                  {columns.slice(0, spill ? 4 : 25).map((c, i) => (
                    <td
                      key={c}
                      colSpan={spill && i === 3 ? 22 : 1}
                      className="h-5 overflow-hidden border-r border-b border-[#dadada] p-0 pl-0.5 whitespace-nowrap"
                    >
                      {cells[i]}
                    </td>
                  ))}
                </tr>
              );
            })}
            <tr>
              <th aria-label="10" className="h-5 border-r border-[#ababab] bg-[#ededed] p-0" />
              {columns.map((c) => (
                <td key={c} className="h-5 border-r border-[#dadada] p-0" />
              ))}
            </tr>
          </tbody>
        </table>
      </div>
      <div className="pointer-events-none absolute top-[11px] left-[10px] h-[88px] w-[720px] border-[5px] border-[#fc2d1d]" />
    </main>
  );
}

export default function App() {
  return (
    <div className="flex h-screen w-full flex-col overflow-hidden bg-[#ededed] font-['Noto_Sans',sans-serif] text-[11px] leading-4 text-[#222]">
      <TabBar />
      <Ribbon />
      <MessageBar />
      <FormulaBar />
      <Sheet />
    </div>
  );
}
